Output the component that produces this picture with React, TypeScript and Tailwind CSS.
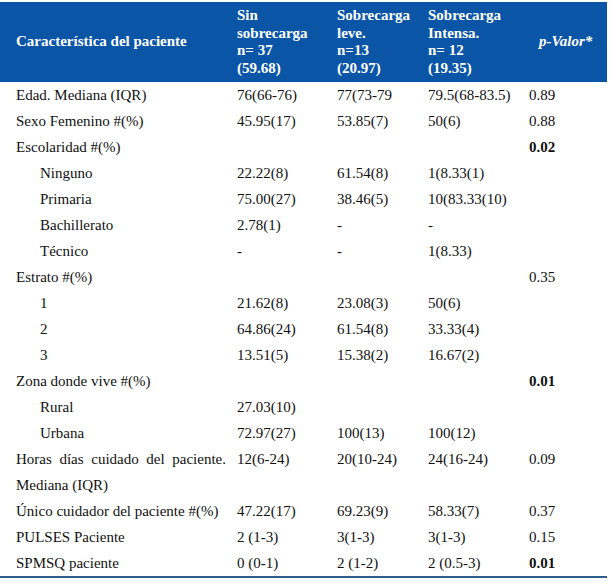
const rows: { label: string; indent?: boolean; v: string[]; p?: string; bold?: boolean; wrap?: boolean }[] = [
  { label: "Edad. Mediana (IQR)", v: ["76(66-76)", "77(73-79", "79.5(68-83.5)"], p: "0.89" },
  { label: "Sexo Femenino #(%)", v: ["45.95(17)", "53.85(7)", "50(6)"], p: "0.88" },
  { label: "Escolaridad #(%)", v: ["", "", ""], p: "0.02", bold: true },
  { label: "Ninguno", indent: true, v: ["22.22(8)", "61.54(8)", "1(8.33(1)"] },
  { label: "Primaria", indent: true, v: ["75.00(27)", "38.46(5)", "10(83.33(10)"] },
  { label: "Bachillerato", indent: true, v: ["2.78(1)", "-", "-"] },
  { label: "Técnico", indent: true, v: ["-", "-", "1(8.33)"] },
  { label: "Estrato #(%)", v: ["", "", ""], p: "0.35" },
  { label: "1", indent: true, v: ["21.62(8)", "23.08(3)", "50(6)"] },
  { label: "2", indent: true, v: ["64.86(24)", "61.54(8)", "33.33(4)"] },
  { label: "3", indent: true, v: ["13.51(5)", "15.38(2)", "16.67(2)"] },
  { label: "Zona donde vive #(%)", v: ["", "", ""], p: "0.01", bold: true },
  { label: "Rural", indent: true, v: ["27.03(10)", "", ""] },
  { label: "Urbana", indent: true, v: ["72.97(27)", "100(13)", "100(12)"] },
  { label: "Horas días cuidado del paciente. Mediana (IQR)", wrap: true, v: ["12(6-24)", "20(10-24)", "24(16-24)"], p: "0.09" },
  { label: "Único cuidador del paciente #(%)", v: ["47.22(17)", "69.23(9)", "58.33(7)"], p: "0.37" },
  { label: "PULSES Paciente", v: ["2 (1-3)", "3(1-3)", "3(1-3)"], p: "0.15" },
  { label: "SPMSQ paciente", v: ["0 (0-1)", "2 (1-2)", "2 (0.5-3)"], p: "0.01", bold: true },
];

export default function App() {
  return (
    <div className="w-[610px] h-[581px] bg-white pt-[2px] font-['Liberation_Serif',serif] text-[15px] text-[#111]">
      <table className="w-[607px] table-fixed border-collapse border-b-2 border-[#2d5f8e]">
        <colgroup>
          <col className="w-[229px]" />
          <col className="w-[100px]" />
          <col className="w-[91px]" />
          <col className="w-[101px]" />
          <col className="w-[86px]" />
        </colgroup>
        <thead>
          <tr className="bg-[#0a55a6] text-white font-bold h-[80px] leading-[17.5px]">
            <th className="text-left align-middle pl-4">Característica del paciente</th>
            <th className="text-left align-middle pl-2">
              Sin<br />sobrecarga<br />n= 37<br />(59.68)
            </th>
            <th className="text-left align-middle pl-2">
              Sobrecarga<br />leve.<br />n=13<br />(20.97)
            </th>
            <th className="text-left align-middle pl-2">
              Sobrecarga<br />Intensa.<br />n= 12<br />(19.35)
            </th>
            <th className="text-left align-middle pl-[18px] italic">p-Valor*</th>
          </tr>
        </thead>
        <tbody className="leading-[26px]">
          {rows.map((r, i) => (
            <tr key={i} className="align-top">
              <td className={r.indent ? "pl-10" : r.wrap ? "pl-4 pr-[3px] text-justify" : "pl-4 whitespace-nowrap"}>
                {r.label}
              </td>
              {r.v.map((c, j) => (
                <td key={j} className="pl-2 whitespace-nowrap">{c}</td>
              ))}
              <td className={`pl-2 ${r.bold ? "font-bold" : ""}`}>{r.p ?? ""}</td>
            </tr>
          ))}
        </tbody>
      </table>
    </div>
  );
}
